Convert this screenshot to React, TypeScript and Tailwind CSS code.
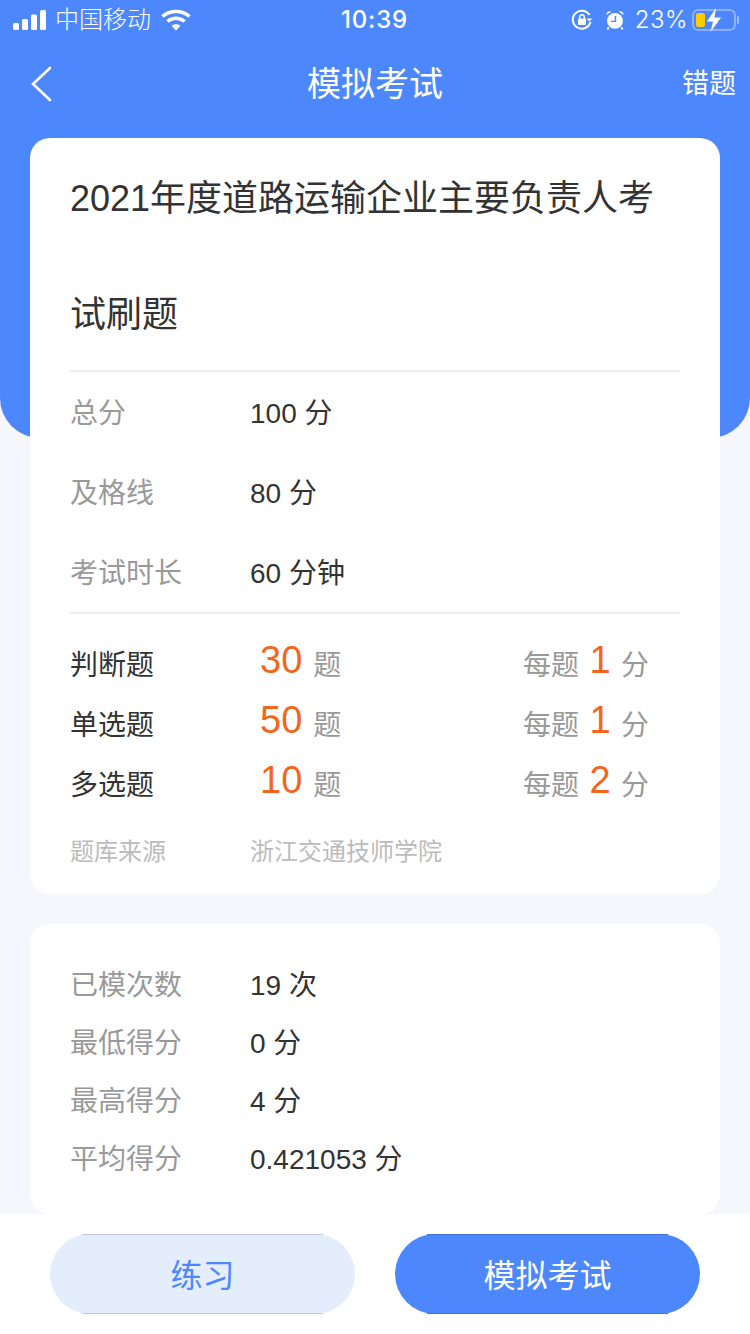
const font = "font-['Liberation_Sans','Noto_Sans_CJK_SC',sans-serif]"
const statusFont = "font-['Inter','Noto_Sans_CJK_SC',sans-serif]"

const StatusBar = () => (
  <div className={`flex h-[40px] items-center justify-between pl-[13px] pr-[10px] text-white ${statusFont}`}>
    <div className="flex w-[230px] items-center">
      {/* Signal */}
      <svg width="34" height="20" viewBox="0 0 34 20" fill="white">
        <rect x="0" y="13" width="6" height="7" rx="1.5" />
        <rect x="9" y="9" width="6" height="11" rx="1.5" />
        <rect x="18" y="4.5" width="6" height="15.5" rx="1.5" />
        <rect x="27" y="0" width="6" height="20" rx="1.5" />
      </svg>
      <span className="ml-[8px] text-[24px] leading-[30px] font-light whitespace-nowrap">中国移动</span>
      {/* Wifi */}
      <svg className="ml-[10px]" width="30" height="22" viewBox="0 0 30 22" fill="none" stroke="white" strokeWidth="3.6">
        <path d="M1.5 7.5C9 0.8 21 0.8 28.5 7.5" />
        <path d="M6.5 12.5C11.5 8.2 18.5 8.2 23.5 12.5" />
        <path d="M15 21.5L10.5 16.8C13 14.8 17 14.8 19.5 16.8Z" fill="white" stroke="none" />
      </svg>
    </div>
    <div className="-ml-[4px] text-[24px] leading-[30px] font-medium tracking-[0.8px]">10:39</div>
    <div className="flex w-[230px] items-center justify-end">
      {/* Rotation lock */}
      <svg width="22" height="22" viewBox="0 0 22 22" fill="none" stroke="white" strokeWidth="2">
        <path d="M19.5 13A9 9 0 1 1 18.5 6" />
        <path d="M21.5 9.5L18.2 12.5L15.5 9.5Z" fill="white" stroke="none" />
        <rect x="7" y="9.5" width="8" height="6.5" rx="1" fill="white" stroke="none" />
        <path d="M8.7 10V8a2.3 2.3 0 0 1 4.6 0v2" strokeWidth="1.4" />
      </svg>
      {/* Alarm */}
      <svg className="ml-[13px]" width="18" height="20" viewBox="0 0 20 22" fill="white">
        <circle cx="10" cy="12" r="8.8" />
        <path d="M0.5 5.5A4 4 0 0 1 6 1.5ZM19.5 5.5A4 4 0 0 0 14 1.5Z" />
        <path d="M3 19L1.5 21.5M17 19L18.5 21.5" stroke="white" strokeWidth="2" />
        <path d="M10.5 6.5V12.5H5.5" fill="none" stroke="#4d87fe" strokeWidth="1.6" />
      </svg>
      <span className="ml-[11px] text-[24px] leading-[30px] font-light tracking-[0.5px]">23%</span>
      {/* Battery charging */}
      <svg className="ml-[4px]" width="48" height="24" viewBox="0 0 48 24" fill="none">
        <rect x="1" y="2" width="42" height="20" rx="5" stroke="white" strokeOpacity="0.45" strokeWidth="1.6" />
        <rect x="4" y="5" width="9" height="14" rx="2.5" fill="#ffcc00" />
        <path d="M46 9v6" stroke="white" strokeOpacity="0.45" strokeWidth="2" strokeLinecap="round" />
        <path d="M24 0L15 13.5H21L18.5 24L29 9.5H22.5Z" fill="white" />
      </svg>
    </div>
  </div>
)

const NavBar = () => (
  <div className="flex h-[88px] items-center justify-between pl-[30px] pr-[14px] text-white">
    <div className="w-[70px]">
      <svg width="24" height="36" viewBox="0 0 24 36" fill="none" stroke="white" strokeWidth="2.6" strokeLinecap="round">
        <path d="M20 2L3 18L20 34" />
      </svg>
    </div>
    <div className="ml-[-32px] text-[34px] leading-[44px]">模拟考试</div>
    <div className="w-[54px] text-[27px] leading-[40px]">错题</div>
  </div>
)

const InfoRow = ({ label, value, h }: { label: string; value: string; h: string }) => (
  <div className={`flex items-center ${h}`}>
    <div className="w-[180px] text-[28px] text-[#999999]">{label}</div>
    <div className="text-[28px] text-[#333333]">{value}</div>
  </div>
)

const TypeRow = ({ name, count, score }: { name: string; count: number; score: number }) => (
  <div className="flex h-[60px] items-center">
    <div className="w-[190px] text-[28px] text-[#333333]">{name}</div>
    <div className="-mt-[8px] flex w-[263px] items-baseline">
      <span className="-translate-y-[2px] text-[38px] text-[#f4661b]">{count}</span>
      <span className="ml-[11px] text-[28px] text-[#999999]">题</span>
    </div>
    <div className="-mt-[8px] flex items-baseline">
      <span className="text-[28px] text-[#999999]">每题</span>
      <span className="w-[42px] -translate-y-[2px] text-center text-[38px] text-[#f4661b]">{score}</span>
      <span className="text-[28px] text-[#999999]">分</span>
    </div>
  </div>
)

export default function App() {
  return (
    <div className={`relative h-[1334px] w-[750px] overflow-hidden bg-[#f6f7fc] ${font}`}>
      <div className="h-[438px] rounded-b-[40px] bg-[#4d87fe]">
        <StatusBar />
        <NavBar />
      </div>

      <div className="-mt-[300px] flex flex-col gap-[30px] px-[30px]">
        {/* Exam info */}
        <div className="h-[756px] rounded-[20px] bg-white px-[40px]">
          <div className="h-[234px] border-b-2 border-[#eeeeee] pt-[3px] text-[36px] leading-[116px] text-[#333333]">
            2021年度道路运输企业主要负责人考试刷题
          </div>
          <div className="h-[242px] border-b-2 border-[#eeeeee] pt-[2px]">
            <InfoRow label="总分" value="100 分" h="h-[80px]" />
            <InfoRow label="及格线" value="80 分" h="h-[80px]" />
            <InfoRow label="考试时长" value="60 分钟" h="h-[80px]" />
          </div>
          <div className="pt-[22px]">
            <TypeRow name="判断题" count={30} score={1} />
            <TypeRow name="单选题" count={50} score={1} />
            <TypeRow name="多选题" count={10} score={2} />
          </div>
          <div className="mt-[16px] flex text-[24px] leading-[40px] text-[#bbbbbb]">
            <div className="w-[180px]">题库来源</div>
            <div>浙江交通技师学院</div>
          </div>
        </div>

        {/* Mock exam stats */}
        <div className="h-[290px] rounded-[20px] bg-white px-[40px] pt-[33px]">
          <InfoRow label="已模次数" value="19 次" h="h-[58px]" />
          <InfoRow label="最低得分" value="0 分" h="h-[58px]" />
          <InfoRow label="最高得分" value="4 分" h="h-[58px]" />
          <InfoRow label="平均得分" value="0.421053 分" h="h-[58px]" />
        </div>
      </div>

      {/* Bottom actions */}
      <div className="absolute bottom-0 left-0 flex h-[120px] w-full items-center justify-between bg-white px-[50px]">
        <button className="relative h-[80px] w-[305px] rounded-full bg-[#e4edfc] pt-[3px] text-[32px] text-[#4d87fe] before:absolute before:top-0 before:right-[32px] before:left-[32px] before:h-px before:bg-[#bcc8e0] after:absolute after:right-[32px] after:bottom-0 after:left-[32px] after:h-px after:bg-[#bcc8e0]">练习</button>
        <button className="relative h-[80px] w-[305px] rounded-full bg-[#4d87fe] pt-[3px] text-[32px] text-white before:absolute before:top-0 before:right-[32px] before:left-[32px] before:h-px before:bg-[#3f72d8] after:absolute after:right-[32px] after:bottom-0 after:left-[32px] after:h-px after:bg-[#3f72d8]">模拟考试</button>
      </div>
    </div>
  )
}
